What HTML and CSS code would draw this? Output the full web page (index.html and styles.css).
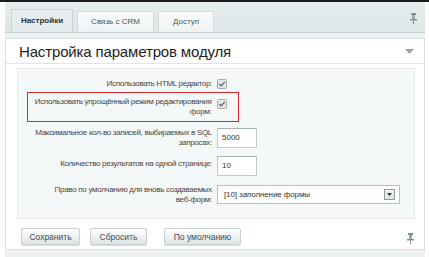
FILE: index.html
```html
<!DOCTYPE html>
<html>
<head>
<meta charset="utf-8">
<link rel="stylesheet" href="styles.css">
</head>
<body>
<div class="topline"></div>
<div class="wrap">
  <div class="tabbar">
    <div class="tab active">Настройки</div>
    <div class="tab">Связь с CRM</div>
    <div class="tab">Доступ</div>
    <div class="spacer"></div>
    <svg class="pin pin-top" width="7" height="11" viewBox="0 0 7 11"><rect x="1" y="0" width="5" height="2" fill="#7f9095"/><rect x="2" y="2" width="3" height="4" fill="#9aa9ad"/><rect x="0" y="6" width="7" height="1.5" fill="#7f9095"/><rect x="3" y="7.5" width="1" height="3.5" fill="#7f9095"/></svg>
  </div>
  <div class="panel">
    <div class="head">
      <div class="title">Настройка параметров модуля</div>
      <svg class="collapse" width="9" height="5" viewBox="0 0 9 5"><path d="M0 0 H9 L4.5 5 Z" fill="#9aa5a9"/></svg>
    </div>
    <div class="form">
      <div class="row r1">
        <div class="lbl">Использовать HTML редактор:</div>
        <div class="ctl"><svg class="cb" width="10" height="10" viewBox="0 0 10 10"><rect x="0.5" y="0.5" width="9" height="9" rx="1" fill="#e3e6e7" stroke="#a5adb0"/><path d="M2.3 5 L4.2 6.8 L7.8 2.8" fill="none" stroke="#5a666a" stroke-width="1.2"/></svg></div>
      </div>
      <div class="row hl">
        <div class="lbl">Использовать упрощённый режим редактирования<br>форм:</div>
        <div class="ctl"><svg class="cb" width="10" height="10" viewBox="0 0 10 10"><rect x="0.5" y="0.5" width="9" height="9" rx="1" fill="#e3e6e7" stroke="#a5adb0"/><path d="M2.3 5 L4.2 6.8 L7.8 2.8" fill="none" stroke="#5a666a" stroke-width="1.2"/></svg></div>
      </div>
      <div class="row r3">
        <div class="lbl">Максимальное кол-во записей, выбираемых в SQL<br>запросах:</div>
        <div class="ctl"><div class="inp">5000</div></div>
      </div>
      <div class="row r4">
        <div class="lbl">Количество результатов на одной странице:</div>
        <div class="ctl"><div class="inp">10</div></div>
      </div>
      <div class="row r5">
        <div class="lbl">Право по умолчанию для вновь создаваемых<br>веб-форм:</div>
        <div class="ctl"><div class="sel"><span>[10] заполнение формы</span><span class="arr"><svg width="5" height="3" viewBox="0 0 5 3"><path d="M0 0 H5 L2.5 3 Z" fill="#333"/></svg></span></div></div>
      </div>
    </div>
    <div class="buttons">
      <div class="btn w1">Сохранить</div>
      <div class="btn w2">Сбросить</div>
      <div class="btn w3">По умолчанию</div>
      <div class="spacer"></div>
      <svg class="pin pin-bot" width="7" height="11" viewBox="0 0 7 11"><rect x="1" y="0" width="5" height="2" fill="#7f9095"/><rect x="2" y="2" width="3" height="4" fill="#9aa9ad"/><rect x="0" y="6" width="7" height="1.5" fill="#7f9095"/><rect x="3" y="7.5" width="1" height="3.5" fill="#7f9095"/></svg>
    </div>
  </div>
</div>
</body>
</html>
```
FILE: styles.css
```css
html, body {
  margin: 0;
  padding: 0;
  background: #ffffff;
  font-family: "Liberation Sans", Arial, sans-serif;
  width: 429px;
  height: 257px;
  overflow: hidden;
}
.topline {
  height: 2px;
  background: #1c1c1c;
}
.wrap {
  margin: 0 4px 0 5px;
  background: #edf1f2;
  height: 255px;
}
.tabbar {
  height: 31px;
  background: linear-gradient(#e6edee, #dde6e8);
  border-bottom: 1px solid #c8d3d6;
  display: flex;
  align-items: flex-end;
  padding-left: 6px;
  padding-right: 8px;
  gap: 4px;
  box-sizing: border-box;
}
.tab {
  height: 21px;
  width: 77px;
  box-sizing: border-box;
  border: 1px solid #d3dbdd;
  border-bottom: none;
  background: linear-gradient(#fbfcfc, #eef2f3);
  font-size: 8px;
  color: #4a5559;
  display: flex;
  align-items: center;
  justify-content: center;
  padding-bottom: 1px;
}
.tab.active {
  height: 23px;
  width: 62px;
  background: linear-gradient(#e9eff0, #e2eaec);
  border-color: #c9d3d6;
  font-weight: bold;
  color: #2b3538;
}
.tab:nth-child(3) { width: 56px; }
.spacer { flex: 1; }
.pin-top { align-self: center; margin-top: 2px; }
.panel {
  margin-top: 5px;
  background: #ffffff;
  border: 1px solid #d5dde0;
  height: 212px;
  box-sizing: border-box;
}
.head {
  display: flex;
  align-items: center;
  height: 24px;
  padding: 0 10px 0 13px;
  border-bottom: 1px solid #dfe6e8;
}
.title {
  flex: 1;
  font-size: 15px;
  color: #1e1e1e;
  letter-spacing: -0.15px;
}
.collapse { margin-top: 1px; }
.form {
  margin: 4px 9px 0 11px;
  background: #f5f8f9;
  border: 1px solid #e6ecee;
  height: 151px;
  box-sizing: border-box;
  padding-top: 9px;
  font-size: 8px;
  letter-spacing: -0.3px;
  color: #454545;
}
.row {
  display: flex;
  align-items: center;
  line-height: 10px;
}
.lbl {
  width: 194px;
  text-align: right;
  box-sizing: border-box;
  white-space: nowrap;
}
.ctl {
  margin-left: 5px;
  display: flex;
}
.r1 { height: 12px; }
.hl {
  margin: 2px 0 0 9px;
  width: 212px;
  height: 30px;
  border: 1.5px solid #d8262c;
  box-sizing: border-box;
  align-items: center;
}
.hl .lbl { width: 183.5px; }
.hl .ctl { align-self: flex-start; margin-top: 6px; }
.r3 { margin-top: 6px; height: 20px; }
.r4 { margin-top: 8px; height: 20px; align-items: flex-start; }
.r4 .lbl { padding-top: 3px; }
.r5 { margin-top: 9px; height: 19px; }
.inp {
  width: 40px;
  height: 20px;
  box-sizing: border-box;
  border: 1px solid #c2cacd;
  border-top-color: #a9b3b6;
  background: #fff;
  font-size: 8px;
  letter-spacing: 0;
  line-height: 18px;
  padding-left: 4px;
  color: #333;
}
.sel {
  width: 183px;
  height: 19px;
  box-sizing: border-box;
  border: 1px solid #b7c1c4;
  background: #fff;
  display: flex;
  align-items: center;
  justify-content: space-between;
  padding: 0 4px 0 6px;
  font-size: 8px;
  letter-spacing: -0.1px;
  color: #333;
}
.arr {
  width: 9px;
  height: 9px;
  border: 1px solid #8f9a9e;
  background: linear-gradient(#f6f7f7, #d9dedf);
  display: flex;
  align-items: center;
  justify-content: center;
}
.buttons {
  display: flex;
  align-items: center;
  padding: 9px 10px 0 15px;
  gap: 10px;
}
.btn {
  height: 17px;
  box-sizing: border-box;
  border: 1px solid #c7d0d3;
  border-radius: 2px;
  background: linear-gradient(#ffffff, #dde4e6);
  box-shadow: 0 1px 1px rgba(0,0,0,0.15);
  font-size: 8.5px;
  color: #3d4f56;
  display: flex;
  align-items: center;
  justify-content: center;
}
.w1 { width: 59px; }
.w2 { width: 57px; }
.w3 { width: 77px; margin-left: 7px; }
.pin-bot { margin-top: 3px; }
```
